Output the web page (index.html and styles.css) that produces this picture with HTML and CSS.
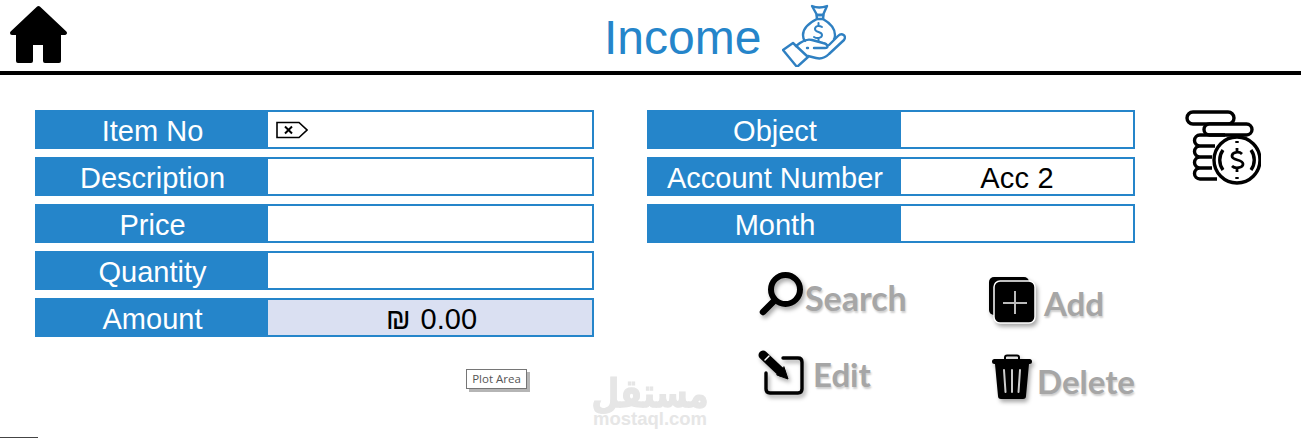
FILE: index.html
```html
<!DOCTYPE html>
<html lang="en">
  <head>
    <meta charset="UTF-8" />
    <title>Income</title>
    <link rel="stylesheet" href="styles.css">
  </head>
  <body>
    <header class="topbar">
      <svg class="home-icon" viewBox="0 0 58 58">
        <path d="M28.5 3 L55 28 H49 V56 H35 V38 H21 V56 H8 V28 H2 Z" fill="#000" stroke="#000" stroke-width="4" stroke-linejoin="round" />
      </svg>
      <h1 class="title">Income</h1>
      <svg class="money-icon" viewBox="0 0 64 64" fill="none" stroke="#2f80c2" stroke-width="2.4" stroke-linecap="round" stroke-linejoin="round">
        <path d="M30 3 Q37 6 45 3 L41 12 H35 Z" />
        <path d="M34.500 12 H41.500 L41 16 H35 Z" />
        <path d="M35 16 C27 20 21 26 21 32 C21 35 22 37 23 38 M41 16 C48 20 53 26 53 32 C53 34 53 35 52 36" />
        <path d="M40 24 C37 22 33 23 33 26 C33 30 40 28 40 32 C40 35 35 36 32 34 M36.500 20 V23 M36.500 35 V38" stroke-width="2" />
        <path d="M1 47 L11 40 L26 54 L15 64 Z" />
        <path d="M14 43 L18 40 C22 37 26 36 30 37 L41 40 C46 41 47 45 43 45 H32 M47 42 L56 33 C60 29 65 33 62 37 L47 51 C42 56 38 56 34 55 L26 53" />
        <path d="M25 45 H26" />
      </svg>
    </header>

    <main class="content">
      <section class="form form--left">
        <div class="row">
          <div class="row-label">Item No</div>
          <div class="row-value row-value--tag">
            <svg class="tag-icon" viewBox="0 0 32 18" fill="none" stroke="#000" stroke-width="1.6">
              <path d="M1 1.5 H23 L31 9 L23 16.5 H1 Z" />
              <path d="M9 5.500 L16 12.500 M16 5.500 L9 12.500" stroke-width="2" />
            </svg>
          </div>
        </div>
        <div class="row">
          <div class="row-label">Description</div>
          <div class="row-value"></div>
        </div>
        <div class="row">
          <div class="row-label">Price</div>
          <div class="row-value"></div>
        </div>
        <div class="row">
          <div class="row-label">Quantity</div>
          <div class="row-value"></div>
        </div>
        <div class="row">
          <div class="row-label">Amount</div>
          <div class="row-value row-value--total">₪ 0.00</div>
        </div>
      </section>

      <section class="form form--right">
        <div class="row">
          <div class="row-label">Object</div>
          <div class="row-value"></div>
        </div>
        <div class="row">
          <div class="row-label">Account Number</div>
          <div class="row-value">Acc 2</div>
        </div>
        <div class="row">
          <div class="row-label">Month</div>
          <div class="row-value"></div>
        </div>

        <div class="actions">
          <div class="action action--search">
            <svg class="action-icon" viewBox="0 0 48 48" fill="none" stroke="#000" stroke-linecap="round">
              <circle cx="28.500" cy="17.500" r="14.500" stroke-width="6" />
              <path d="M16 30 L6 40" stroke-width="6.500" />
            </svg>
            <span class="action-text">Search</span>
          </div>
          <div class="action action--add">
            <svg class="action-icon" viewBox="0 0 48 48">
              <rect x="1" y="0" width="40" height="38" rx="5" fill="#000" />
              <rect x="6" y="4" width="41" height="42" rx="6" fill="#000" stroke="#fff" stroke-width="1.500" />
              <path d="M27 14 V37 M15 26 H39" stroke="#bbb" stroke-width="2" />
            </svg>
            <span class="action-text">Add</span>
          </div>
          <div class="action action--edit">
            <svg class="action-icon" viewBox="0 0 48 48" fill="none" stroke="#000" stroke-linecap="round" stroke-linejoin="round">
              <path d="M26 10 H41 Q45 10 45 14 V41 Q45 45 41 45 H13 Q9 45 9 41 V25" stroke-width="3.400" />
              <path d="M6 7 L24 24" stroke-width="9" />
              <path d="M20 27 L31 31 L27 19 Z" fill="#000" stroke-width="1" />
              <path d="M8 12 L12 8" stroke="#fff" stroke-width="1.500" />
            </svg>
            <span class="action-text">Edit</span>
          </div>
          <div class="action action--delete">
            <svg class="action-icon" viewBox="0 0 40 46">
              <path d="M13 5 V3.500 Q13 1.500 15 1.500 H25 Q27 1.500 27 3.500 V5" fill="none" stroke="#000" stroke-width="2" />
              <rect x="0" y="5" width="40" height="5" rx="2.500" fill="#000" />
              <path d="M3 10 H37 L34 42 Q34 45 31 45 H9 Q6 45 6 42 Z" fill="#000" />
              <path d="M12 16 L13.500 38 M20 16 V38 M28 16 L26.500 38" stroke="#ccc" stroke-width="2" stroke-linecap="round" />
            </svg>
            <span class="action-text">Delete</span>
          </div>
        </div>
      </section>

      <svg class="coins-icon" viewBox="0 0 76 78" fill="none" stroke="#000" stroke-width="3.400">
        <rect x="2" y="2" width="47" height="12" rx="6" />
        <rect x="19" y="14" width="48" height="11" rx="5.500" fill="#fff" />
        <path d="M40 25 H15 A5.500 5.500 0 0 0 15 36 H30 M15 36 A5.500 5.500 0 0 0 15 47 H27 M15 47 A5.500 5.500 0 0 0 15 58 H27 M15 58 A5.500 5.500 0 0 0 15 69 H32" />
        <circle cx="52" cy="50" r="23" fill="#fff" />
        <path d="M38 40 A17 17 0 0 0 38 60 M66 40 A17 17 0 0 1 66 60" />
        <path d="M57 44 C54 41 47 42 47 46 C47 51 58 49 58 54 C58 58 50 59 47 56 M52 38 V42 M52 58 V62" stroke-width="2.800" />
        <path d="M52 31 V33 M52 67 V69" />
      </svg>
    </main>

    <div class="tooltip">Plot Area</div>
    <div class="watermark">
      <span class="watermark-ar" lang="ar" dir="rtl">مستقل</span>
      <span class="watermark-en">mostaql.com</span>
    </div>
    <div class="corner-line"></div>
  </body>
</html>
```

FILE: styles.css
```css
/* MAIN COLOR: #2585ca */

* {
  margin: 0;
  padding: 0;
  box-sizing: border-box;
}

html,
body {
  height: 438px;
  overflow: hidden;
}

body {
  position: relative;
  background-color: #fff;
  font-family: "Liberation Sans", Arial, sans-serif;
  color: #000;
}

/* HEADER */
.topbar {
  height: 75px;
  border-bottom: 4px solid #000;
  padding-left: 10px;
  display: flex;
  align-items: flex-start;
}

.home-icon {
  width: 58px;
  height: 58px;
  margin-top: 5px;
  flex-shrink: 0;
}

.title {
  margin-left: 536px;
  margin-top: 10px;
  font-size: 48px;
  font-weight: 400;
  line-height: 55px;
  color: #2585ca;
}

.money-icon {
  width: 64px;
  height: 64px;
  margin-left: 21px;
  margin-top: 3px;
}

/* FORMS */
.content {
  padding: 35px 0 0 35px;
  display: flex;
  align-items: flex-start;
}

.form {
  display: flex;
  flex-direction: column;
  gap: 8px;
}

.form--left {
  width: 559px;
}

.form--right {
  width: 488px;
  margin-left: 53px;
}

.row {
  height: 39px;
  border: 2px solid #2585ca;
  display: flex;
  font-size: 29px;
  line-height: 39px;
}

.row-label {
  background-color: #2585ca;
  color: #fff;
  text-align: center;
  flex-shrink: 0;
}

.form--left .row-label {
  width: 231px;
}

.form--right .row-label {
  width: 252px;
}

.row-value {
  flex: 1;
  height: 35px;
  text-align: center;
  letter-spacing: 0.2px;
}

.row-value--tag {
  padding: 9px 0 0 8px;
  text-align: left;
}

.row-value--total {
  background-color: #dae0f2;
  letter-spacing: 0;
  word-spacing: 2px;
  padding-left: 3px;
}

.tag-icon {
  display: block;
  width: 32px;
  height: 18px;
}

.coins-icon {
  width: 76px;
  height: 78px;
  margin-left: 50px;
  flex-shrink: 0;
}

/* ACTIONS */
.actions {
  margin-top: 21px;
  padding-left: 110px;
  display: grid;
  grid-template-columns: 231px 1fr;
  grid-template-rows: 76px 76px;
}

.action {
  display: flex;
  align-items: center;
  height: 48px;
}

.action-icon {
  width: 48px;
  height: 48px;
  flex-shrink: 0;
  filter: drop-shadow(2px 3px 2px rgba(0, 0, 0, 0.35));
}

.action-text {
  padding-top: 3px;
  font-family: Lato, sans-serif;
  font-size: 33px;
  font-weight: 700;
  color: #a6a6a6;
  text-shadow: 1px 2px 2px rgba(0, 0, 0, 0.2);
}

.action--search .action-text {
  font-size: 34px;
}

.action--add {
  margin-top: 5px;
}

.action--add .action-text {
  margin-left: 8px;
}

.action--edit .action-text {
  margin-left: 8px;
}

.action--delete {
  margin-top: 5px;
  margin-left: 4px;
}

.action--delete .action-icon {
  width: 40px;
  height: 46px;
}

.action--delete .action-text {
  margin-left: 5px;
  padding-top: 7px;
}

/* OVERLAYS */
.tooltip {
  position: absolute;
  left: 466px;
  top: 369px;
  width: 61px;
  height: 20px;
  border: 1px solid #767676;
  background-color: #fff;
  box-shadow: 3px 3px 0 #b5b5b5;
  font-family: "Open Sans", sans-serif;
  font-size: 11.5px;
  line-height: 18px;
  text-align: center;
  color: #555;
}

.watermark {
  position: absolute;
  left: 593px;
  top: 374px;
  width: 114px;
  display: flex;
  flex-direction: column;
  align-items: center;
  color: #e6e6e6;
  font-weight: 700;
}

.watermark-ar {
  height: 36px;
  font-family: "DejaVu Sans", sans-serif;
  font-size: 32px;
  line-height: 30px;
  -webkit-text-stroke: 1px #e6e6e6;
  transform: scaleY(1.25);
  transform-origin: top;
}

.watermark-en {
  font-size: 18.500px;
  line-height: 18px;
}

.corner-line {
  position: absolute;
  left: 0;
  bottom: 0;
  width: 38px;
  height: 1px;
  background-color: #444;
}
```
